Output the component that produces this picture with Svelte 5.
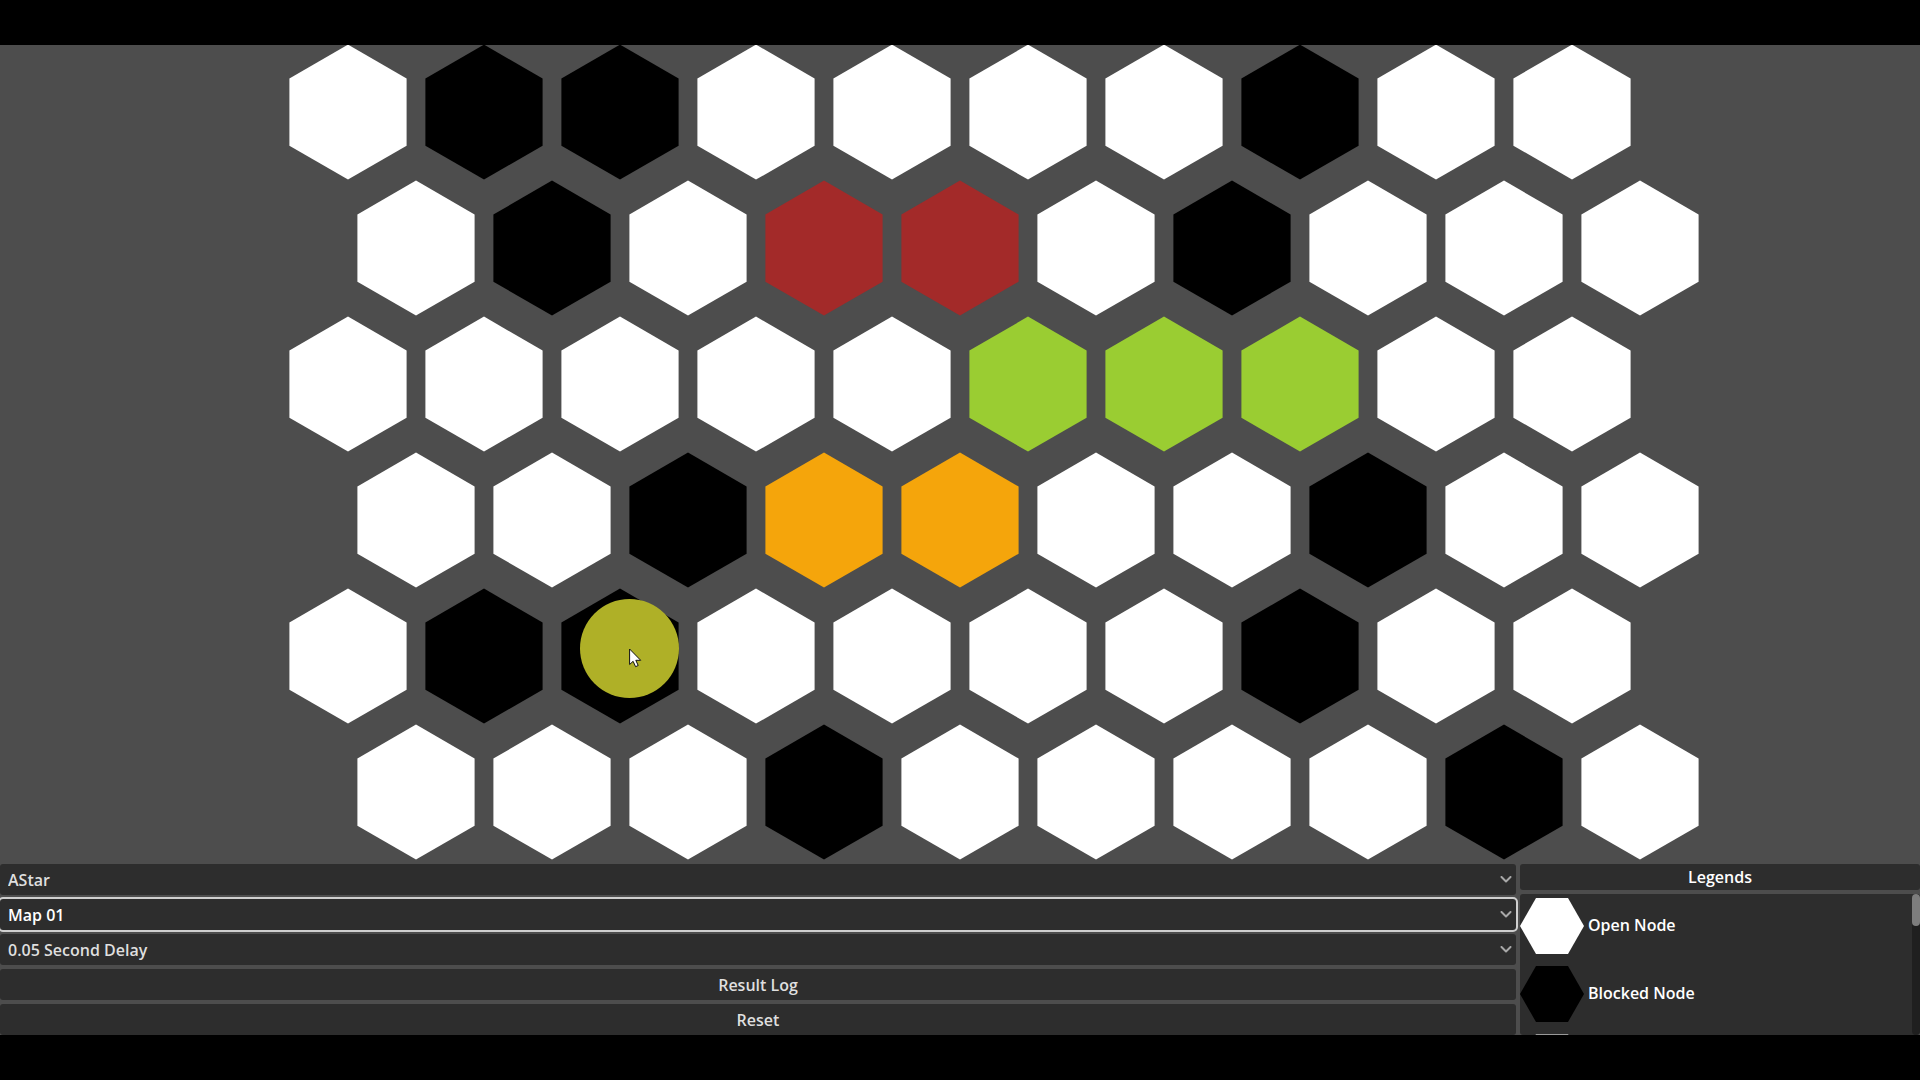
<script>
  const rows = [
    'obbooooboo',
    'oboccobooo',
    'ooooogggoo',
    'oobaaooboo',
    'obboooo' + 'boo',
    'oooboooobo'
  ];
  const kinds = { o: 'open', b: 'blocked', c: 'closed', g: 'path', a: 'frontier' };
  const pointer = { row: 4, col: 2 };
  const legends = [
    { kind: 'open', label: 'Open Node' },
    { kind: 'blocked', label: 'Blocked Node' },
    { kind: 'idle', label: '' }
  ];
</script>

{#snippet chevron()}
  <svg class="chevron" viewBox="0 0 12 8" aria-hidden="true"><path d="M1.500 1 6 5.500l4.500-4.500" /></svg>
{/snippet}

<div class="app">
  <main class="stage">
    <div class="board">
      {#each rows as row, r}
        <div class="row" class:shifted={r % 2 === 1}>
          {#each row as cell, c}
            <div class="cell">
              <svg class="hex {kinds[cell]}" viewBox="0 0 118 136"><polygon points="59,0.600 117.600,34.500 117.600,101.700 59,135.600 0.400,101.700 0.400,34.500" /></svg>
              {#if r === pointer.row && c === pointer.col}
                <div class="halo">
                  <svg class="cursor" viewBox="0 0 14 21"><path d="M.6 1v15.500l3.500-3.200 2.500 5.400 2.600-1.200-2.400-5.200h4.900z" /></svg>
                </div>
              {/if}
            </div>
          {/each}
        </div>
      {/each}
    </div>
  </main>

  <section class="panel">
    <div class="controls">
      <label class="field">
        <select aria-label="Algorithm"><option>AStar</option></select>
        {@render chevron()}
      </label>
      <label class="field">
        <select class="focused" aria-label="Map"><option>Map 01</option></select>
        {@render chevron()}
      </label>
      <label class="field">
        <select aria-label="Delay"><option>0.05 Second Delay</option></select>
        {@render chevron()}
      </label>
      <button type="button">Result Log</button>
      <button type="button">Reset</button>
    </div>
    <aside class="legend">
      <h2>Legends</h2>
      <div class="list">
        <ul>
          {#each legends as item}
            <li>
              <svg class="swatch {item.kind}" viewBox="0 0 64 56"><polygon points="0,28 16,0 48,0 64,28 48,56 16,56" /></svg>
              <span>{item.label}</span>
            </li>
          {/each}
        </ul>
        <div class="track"><div class="thumb"></div></div>
      </div>
    </aside>
  </section>
</div>

<style>
  :global(body) {
    margin: 0;
    background: #000;
  }
  .app {
    box-sizing: border-box;
    height: 100vh;
    padding: 45px 0;
    display: flex;
    flex-direction: column;
    overflow: hidden;
    background: #000;
    color: #fff;
    font: 600 16px/22px "Open Sans", "Noto Sans", sans-serif;
  }
  .stage {
    flex: 1;
    min-height: 0;
    display: flex;
    justify-content: center;
    overflow: hidden;
    background: #4d4d4d;
  }
  .board {
    margin-top: -1px;
    padding-left: 68px;
  }
  .row {
    display: flex;
    gap: 18px;
  }
  .shifted {
    margin-left: 68px;
  }
  .row:not(.shifted) {
    margin-right: 68px;
  }
  .cell {
    position: relative;
    flex: none;
    width: 118px;
    height: 136px;
  }
  .hex {
    display: block;
    width: 118px;
    height: 136px;
  }
  .open { fill: #fff; }
  .blocked { fill: #000; }
  .closed { fill: #a32a29; }
  .path { fill: #9acd32; }
  .frontier { fill: #f5a50b; }
  .idle { fill: #999; }
  .halo {
    position: absolute;
    left: 19px;
    top: 11px;
    width: 99px;
    height: 99px;
    border-radius: 50%;
    background: #afb027;
  }
  .cursor {
    position: absolute;
    left: 49px;
    top: 49px;
    width: 14px;
    height: 21px;
    fill: #fff;
    stroke: #111;
    stroke-width: 1;
  }
  .panel {
    display: flex;
    gap: 4px;
    background: #4d4d4d;
  }
  .controls {
    flex: 1;
    display: flex;
    flex-direction: column;
    gap: 4px;
  }
  .field {
    display: grid;
    grid-template-columns: 1fr;
    align-items: center;
  }
  .field > :global(*) {
    grid-area: 1 / 1;
  }
  select,
  button {
    appearance: none;
    box-sizing: border-box;
    width: 100%;
    height: 31px;
    margin: 0;
    padding: 0 8px;
    border: 0;
    border-radius: 3px;
    background: #2d2d2d;
    color: #dfdfdf;
    font: inherit;
  }
  .focused {
    color: #fff;
    outline: 2px solid #cfcfcf;
  }
  .chevron {
    justify-self: end;
    width: 12px;
    height: 8px;
    margin-right: 4px;
    fill: none;
    stroke: #a8a8a8;
    stroke-width: 2;
    stroke-linecap: round;
    stroke-linejoin: round;
    pointer-events: none;
  }
  .legend {
    width: 400px;
    display: flex;
    flex-direction: column;
    gap: 4px;
  }
  h2 {
    margin: 0;
    border-radius: 3px;
    background: #2d2d2d;
    font: inherit;
    line-height: 26px;
    text-align: center;
  }
  .list {
    flex: 1 1 0;
    min-height: 0;
    display: flex;
    overflow: hidden;
    border-radius: 3px;
    background: #2d2d2d;
  }
  ul {
    flex: 1;
    margin: 0;
    padding: 4px 0 0;
    list-style: none;
  }
  li {
    display: flex;
    align-items: center;
    gap: 4px;
    height: 56px;
    margin-bottom: 12px;
  }
  li span {
    padding-bottom: 2px;
  }
  .swatch {
    width: 64px;
    height: 56px;
  }
  .track {
    width: 8px;
    border-radius: 4px;
    background: #1f1f1f;
  }
  .thumb {
    height: 32px;
    border-radius: 4px;
    background: #7d7d7d;
  }
</style>
